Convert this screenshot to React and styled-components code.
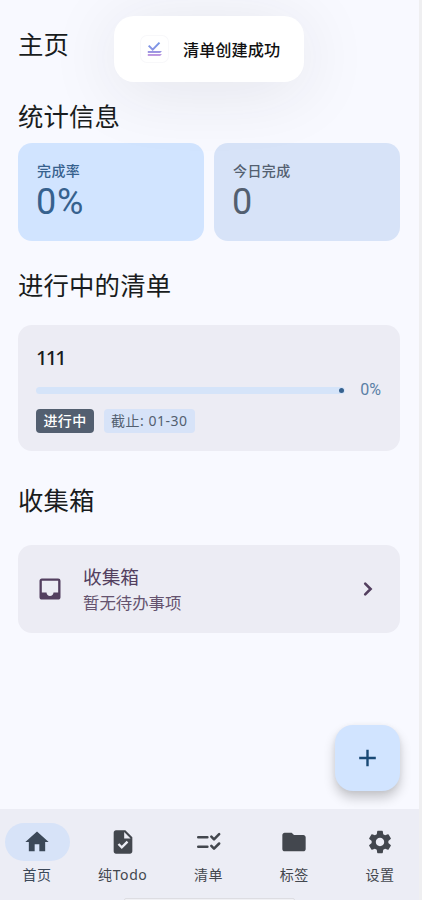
import React from 'react'
import styled, { createGlobalStyle } from 'styled-components'
import { MdHome, MdTask, MdFolder, MdSettings, MdInbox } from 'react-icons/md'

const ChecklistIcon = ({ size }) => (
	<svg width={size} height={size} viewBox='0 0 24 24' fill='none'>
		<g stroke='currentColor' strokeWidth='2.2' strokeLinecap='round' strokeLinejoin='round'>
			<path d='M2.8 8h7.8M2.8 16h7.8' />
			<path d='M14 7.4l2.3 2.3 4.4-4.4M14 15.4l2.3 2.3 4.4-4.4' />
		</g>
	</svg>
)

const navItems = [
	{ label: '首页', Icon: MdHome, active: true },
	{ label: '纯Todo', Icon: MdTask },
	{ label: '清单', Icon: ChecklistIcon },
	{ label: '标签', Icon: MdFolder },
	{ label: '设置', Icon: MdSettings },
]

const StatCard = ({ label, value, primary }) => (
	<StatBox $primary={primary}>
		<StatLabel>{label}</StatLabel>
		<StatValue>{value}</StatValue>
	</StatBox>
)

const ChecklistCard = ({ title, progress, status, deadline }) => (
	<ChecklistBox>
		<ChecklistTitle>{title}</ChecklistTitle>
		<ProgressRow>
			<ProgressTrack>
				<ProgressStop />
			</ProgressTrack>
			<ProgressText>{progress}%</ProgressText>
		</ProgressRow>
		<TagRow>
			<Tag $dark>{status}</Tag>
			<Tag>截止: {deadline}</Tag>
		</TagRow>
	</ChecklistBox>
)

const AppLogo = () => (
	<svg width='28' height='28' viewBox='0 0 28 28' fill='none'>
		<defs>
			<linearGradient id='logo' x1='0' y1='7' x2='0' y2='21' gradientUnits='userSpaceOnUse'>
				<stop offset='0' stopColor='#7396e6' />
				<stop offset='0.6' stopColor='#8c93e3' />
				<stop offset='1' stopColor='#c79be0' />
			</linearGradient>
		</defs>
		<g stroke='url(#logo)' strokeWidth='2'>
			<path d='M8.7 10.6l4 4 6.8-7' />
			<path d='M7.8 17H20.6v.01M7.8 20H20.6v.01' strokeWidth='1.8' />
		</g>
	</svg>
)

export default function App() {
	return (
		<>
			<GlobalStyle />
			<Screen>
				<Content>
					<PageTitle>主页</PageTitle>
					<SectionTitle>统计信息</SectionTitle>
					<StatRow>
						<StatCard label='完成率' value='0%' primary />
						<StatCard label='今日完成' value='0' />
					</StatRow>
					<SectionTitle $top={24} $height={60}>
						进行中的清单
					</SectionTitle>
					<ChecklistCard title='111' progress={0} status='进行中' deadline='01-30' />
					<SectionTitle $top={29} $height={65}>
						收集箱
					</SectionTitle>
					<InboxCard>
						<MdInbox size={28} />
						<InboxText>
							<InboxTitle>收集箱</InboxTitle>
							<InboxSubtitle>暂无待办事项</InboxSubtitle>
						</InboxText>
						<svg width='28' height='28' viewBox='0 0 28 28' fill='none'>
							<path
								d='M11.2 8.6l5.4 5.4-5.4 5.4'
								stroke='currentColor'
								strokeWidth='2.6'
								strokeLinecap='round'
							/>
						</svg>
					</InboxCard>
				</Content>
				<BottomNav>
					{navItems.map(({ label, Icon, active }) => (
						<NavItem key={label} $active={active}>
							<NavPill $active={active}>
								<Icon size={28} />
							</NavPill>
							<NavLabel>{label}</NavLabel>
						</NavItem>
					))}
				</BottomNav>
				<Fab aria-label='add'>
					<svg width='17' height='18' viewBox='0 0 17 18'>
						<path d='M8.5 .7v16.6M.2 9h16.6' stroke='currentColor' strokeWidth='2.4' />
					</svg>
				</Fab>
				<Toast>
					<ToastIcon>
						<AppLogo />
					</ToastIcon>
					<ToastText>清单创建成功</ToastText>
				</Toast>
				<GestureBar />
			</Screen>
		</>
	)
}

// STYLED COMPONENTS
const GlobalStyle = createGlobalStyle`
	* {
		box-sizing: border-box;
	}
	body {
		margin: 0;
		background: #efeff1;
		font-family: 'Noto Sans', 'Noto Sans CJK SC', sans-serif;
	}
	svg {
		display: block;
		flex-shrink: 0;
	}
`
const Screen = styled.div`
	position: relative;
	display: flex;
	flex-direction: column;
	width: 419px;
	height: 900px;
	overflow: hidden;
	background: #f8f9ff;
	color: #191c20;
`
const Content = styled.main`
	flex: 1;
	padding: 24px 19px 0 18px;
`
const PageTitle = styled.h1`
	margin: 0 0 32px;
	font-size: 25.4px;
	font-weight: 400;
	line-height: 40px;
`
const SectionTitle = styled.h2`
	margin: ${({ $top }) => $top || 0}px 0 0;
	height: ${({ $height }) => $height || 47}px;
	font-size: 25.4px;
	font-weight: 400;
	letter-spacing: 0.15px;
	line-height: 40px;
`
const StatRow = styled.div`
	display: grid;
	grid-template-columns: 1fr 1fr;
	gap: 10px;
`
const StatBox = styled.div`
	height: 98px;
	padding: 17px 19px;
	border-radius: 14px;
	background: ${({ $primary }) => ($primary ? '#d1e4ff' : '#d7e3f8')};
	color: ${({ $primary }) => ($primary ? '#36618e' : '#535f70')};
`
const StatLabel = styled.div`
	font-size: 14px;
	font-weight: 500;
	letter-spacing: 0.4px;
	line-height: 21px;
`
const StatValue = styled.div`
	margin-left: -1px;
	font-family: Roboto, sans-serif;
	font-size: 36px;
	letter-spacing: 0.8px;
	line-height: 42px;
`
const ChecklistBox = styled.section`
	height: 126px;
	padding: 20px 19px 0 18px;
	border-radius: 14px;
	background: #ececf4;
`
const ChecklistTitle = styled.div`
	font-size: 20px;
	font-weight: 500;
	letter-spacing: -1.8px;
	line-height: 26px;
`
const ProgressRow = styled.div`
	display: flex;
	align-items: center;
	justify-content: space-between;
	height: 20px;
	margin-top: 9px;
`
const ProgressTrack = styled.div`
	display: flex;
	align-items: center;
	justify-content: flex-end;
	width: 309px;
	height: 7px;
	padding-right: 1px;
	border-radius: 4px;
	background: #d5e4f9;
`
const ProgressStop = styled.span`
	width: 5px;
	height: 5px;
	border-radius: 50%;
	background: #36618e;
`
const ProgressText = styled.span`
	color: #5a7fa6;
	font-family: Roboto, sans-serif;
	font-size: 16px;
	line-height: 20px;
`
const TagRow = styled.div`
	display: flex;
	gap: 9.5px;
	margin-top: 9px;
`
const Tag = styled.span`
	height: 24px;
	padding: 0 7.5px;
	border-radius: 4px;
	background: ${({ $dark }) => ($dark ? '#535f70' : '#d7e3f8')};
	color: ${({ $dark }) => ($dark ? '#fff' : '#535f70')};
	font-size: 14px;
	font-weight: ${({ $dark }) => ($dark ? 500 : 400)};
	letter-spacing: ${({ $dark }) => ($dark ? 0.35 : 0.5)}px;
	line-height: 24px;
	white-space: nowrap;
`
const InboxCard = styled.section`
	display: flex;
	align-items: center;
	height: 88px;
	padding: 0 18px;
	border-radius: 14px;
	background: #ececf4;
	color: #533f5f;
`
const InboxText = styled.div`
	flex: 1;
	margin-left: 19px;
`
const InboxTitle = styled.div`
	font-size: 18.7px;
	line-height: 26px;
`
const InboxSubtitle = styled.div`
	color: #65536f;
	font-size: 16.4px;
	line-height: 25px;
`
const BottomNav = styled.nav`
	display: flex;
	justify-content: space-between;
	height: 91px;
	padding: 14px 6.5px 0 4.5px;
	background: #ecedf5;
`
const NavItem = styled.div`
	display: flex;
	flex-direction: column;
	align-items: center;
	width: 65px;
	color: ${({ $active }) => ($active ? '#3b4858' : '#43474e')};
`
const NavPill = styled.div`
	display: flex;
	align-items: center;
	justify-content: center;
	width: 65px;
	height: 38px;
	border-radius: 19px;
	background: ${({ $active }) => ($active ? '#d7e3f8' : 'transparent')};
`
const NavLabel = styled.span`
	margin-top: 4px;
	font-size: 14px;
	letter-spacing: 0.6px;
	line-height: 20px;
	white-space: nowrap;
`
const Fab = styled.button`
	position: absolute;
	right: 19px;
	bottom: 109px;
	display: flex;
	align-items: center;
	justify-content: center;
	width: 65px;
	height: 66px;
	padding: 0;
	border: 0;
	border-radius: 18px;
	background: #d1e4ff;
	color: #194975;
	box-shadow: 0 7px 12px rgba(0, 0, 0, 0.2), 0 1px 5px rgba(0, 0, 0, 0.05);
`
const Toast = styled.div`
	position: absolute;
	top: 16px;
	left: 114px;
	display: flex;
	align-items: center;
	width: 190px;
	height: 66px;
	padding-left: 26px;
	border-radius: 20px;
	background: #fff;
	box-shadow: 0 8px 70px rgba(40, 44, 50, 0.1);
`
const ToastIcon = styled.div`
	width: 29px;
	height: 28px;
	border-radius: 7px;
	box-shadow: inset 0 0 0 1px #f8f8fa;
`
const ToastText = styled.span`
	margin-left: 14px;
	color: #111;
	font-size: 16.2px;
	font-weight: 500;
	white-space: nowrap;
`
const GestureBar = styled.div`
	position: absolute;
	bottom: -2px;
	left: 124px;
	width: 171px;
	height: 4px;
	border-radius: 3px;
	border: 1px solid #dddde2;
	background: #f1f1f5;
`
